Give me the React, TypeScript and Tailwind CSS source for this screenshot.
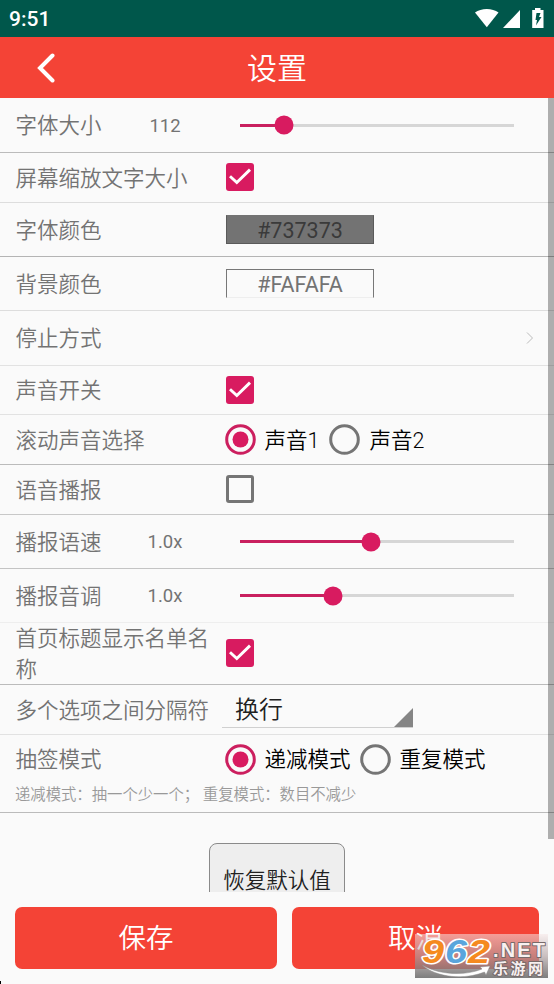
import { ReactNode } from 'react'
import clsx from 'clsx'

// ─────────────────────────────────────────────────────────────
// Controls
// ─────────────────────────────────────────────────────────────

function Checkbox({ checked, className }: { checked?: boolean; className?: string }) {
  if (!checked) {
    return <span className={clsx('size-7 shrink-0 rounded-[3px] border-3 border-[#757575]', className)} />
  }
  return (
    <span className={clsx('size-7 shrink-0 rounded-[3px] bg-[#d81b60]', className)}>
      <svg viewBox="0 0 28 28" className="size-7" fill="none" stroke="#fff" strokeWidth="2.9">
        <path d="M4 13.2 L10.8 19.6 L24 6.6" />
      </svg>
    </span>
  )
}

function Radio({ label, checked }: { label: string; checked?: boolean }) {
  return (
    <label className="flex items-center gap-[9px]">
      <svg viewBox="0 0 31 31" className="size-[31px] shrink-0" fill="none" strokeWidth="3">
        <circle cx="15.5" cy="15.5" r="13.8" stroke={checked ? '#cc1f5f' : '#757575'} />
        {checked && <circle cx="15.5" cy="15.5" r="8" fill="#d81b60" />}
      </svg>
      <span className="pt-[2px] text-[21.5px] leading-7 font-[350] whitespace-nowrap text-black">{label}</span>
    </label>
  )
}

function Slider({ value }: { value: number }) {
  return (
    <div className="relative ml-[14px] h-[3px] w-[274px] bg-[#d6d6d6]">
      <div className="h-full bg-[#c9205f]" style={{ width: value }} />
      <span
        className="absolute top-1/2 size-[19px] -translate-x-1/2 -translate-y-1/2 rounded-full bg-[#d81b60]"
        style={{ left: value }}
      />
    </div>
  )
}

function ColorBox({ value, dark }: { value: string; dark?: boolean }) {
  return (
    <div
      className={clsx(
        'flex h-[29px] w-[148px] items-center justify-center border text-[21.5px]',
        dark
          ? 'border-[#5a5a5a] border-t-[#737373] bg-[#737373] text-[#3a3a3a]'
          : 'border-[#777] border-b-[#eee] text-[#737373]'
      )}
    >
      <span className="pt-[4px]">{value}</span>
    </div>
  )
}

// ─────────────────────────────────────────────────────────────
// Rows
// ─────────────────────────────────────────────────────────────

interface RowProps {
  label: string
  /** Current value shown next to the label */
  value?: string
  className?: string
  children?: ReactNode
}

function Row({ label, value, className, children }: RowProps) {
  return (
    <div className={clsx('flex items-center border-b pl-[15.5px]', className)}>
      <div className="flex w-[210.5px] shrink-0 items-center pt-px">
        <span
          className={clsx('text-[21.5px] leading-[31px] font-[350]', value ? 'w-[116.5px]' : 'w-[196px]')}
        >
          {label}
        </span>
        {value && <span className="w-[66px] pt-[2px] text-center text-[18.5px]">{value}</span>}
      </div>
      {children}
    </div>
  )
}

function StatusBar() {
  return (
    <div className="flex h-[37px] items-center justify-between bg-[#00574b] pr-[9px] pl-[9px] text-white">
      <span className="pt-[2px] text-[21px] font-medium">9:51</span>
      <svg width="70" height="37" viewBox="0 0 70 37" fill="#fff">
        <path d="M0 12.5 C6 7.7 17.5 7.7 23.5 12.5 L11.8 27.3 Z" />
        <path d="M28 28 L45 10 V28 Z" />
        <path d="M57.2 10 H60 V8 H65.5 V10 H68.5 V28 H57.2 Z" />
        <path d="M61.5 13 L65.5 13 L64 17 H66.5 L61 25.5 L62 20 H60.5 Z" fill="#00574b" />
      </svg>
    </div>
  )
}

function Watermark() {
  return (
    <div className="absolute right-[6px] bottom-[6px] h-11 w-[133px] bg-linear-to-b from-[#f6e6e6]/55 via-[#b0a0a0]/65 to-[#707070]/90">
      <svg
        viewBox="0 0 133 44"
        className="h-11 w-[133px] overflow-visible"
        fontFamily="'Liberation Sans', 'Noto Sans CJK SC', sans-serif"
      >
        <g fontSize="34" fontWeight="700" fontStyle="italic" strokeLinejoin="round" paintOrder="stroke">
          <g stroke="#fff" strokeWidth="3">
            <text x="7" y="29" textLength="22" lengthAdjust="spacingAndGlyphs" fill="#f58a1f">9</text>
            <text x="30" y="29" textLength="22" lengthAdjust="spacingAndGlyphs" fill="#5aa5dc">6</text>
            <text x="53" y="29" textLength="22" lengthAdjust="spacingAndGlyphs" fill="#f58a1f">2</text>
          </g>
        </g>
        <path
          d="M7 31 C24 41 50 42 67 35 L65 33 L75 32 L71 41 L69.5 38 C50 46 22 44 7 31 Z"
          fill="#fff"
          stroke="#888"
          strokeWidth="0.5"
        />
        <g fontWeight="700" fill="#f8f0f0" stroke="#776a6a" strokeWidth="2" strokeLinejoin="round" paintOrder="stroke">
          <text x="78" y="22.5" fontSize="20" textLength="52" lengthAdjust="spacing">.NET</text>
          <text x="78" y="39.5" fontSize="15" textLength="50">乐游网</text>
        </g>
      </svg>
    </div>
  )
}

export default function App() {
  return (
    <main className="relative flex h-[984px] w-[554px] flex-col overflow-hidden bg-[#fafafa] font-[Roboto,'Noto_Sans_CJK_SC',sans-serif] text-[#737373]">
      <StatusBar />
      <header className="grid h-[61px] grid-cols-[1fr_auto_1fr] items-center bg-[#f44336] text-white">
        <svg
          width="20"
          height="32"
          viewBox="0 0 20 32"
          className="mb-[2px] ml-9"
          fill="none"
          stroke="#fff"
          strokeWidth="4"
          strokeLinecap="round"
        >
          <path d="M16.5 4.5 L4 17 L16.5 29.5" />
        </svg>
        <h1 className="pt-[2px] text-[30px] font-[350]">设置</h1>
      </header>

      {/* Scrollable settings list, cut off above the footer */}
      <div className="relative h-[794px] overflow-hidden">
        <Row label="字体大小" value="112" className="h-[55px] border-[#bbb]">
          <Slider value={44} />
        </Row>
        <Row label="屏幕缩放文字大小" className="h-[50px] border-[#ddd]">
          <Checkbox checked className="mb-px" />
        </Row>
        <Row label="字体颜色" className="h-[54px] border-[#b4b4b4]">
          <ColorBox value="#737373" dark />
        </Row>
        <Row label="背景颜色" className="h-[54px] border-[#ddd]">
          <ColorBox value="#FAFAFA" />
        </Row>
        <Row label="停止方式" className="h-[55px] border-[#e2e2e2]">
          <svg width="8" height="12" viewBox="0 0 8 12" className="mr-5 ml-auto" fill="none" stroke="#bbb">
            <path d="M1 .5 L6.5 6 L1 11.5" />
          </svg>
        </Row>
        <Row label="声音开关" className="h-[49px] border-[#e2e2e2]">
          <Checkbox checked />
        </Row>
        <Row label="滚动声音选择" className="h-[50px] border-[#bbb]">
          <div className="-ml-[1.5px] flex gap-[10px]">
            <Radio label="声音1" checked />
            <Radio label="声音2" />
          </div>
        </Row>
        <Row label="语音播报" className="h-[50px] border-[#c8c8c8]">
          <Checkbox className="mb-px" />
        </Row>
        <Row label="播报语速" value="1.0x" className="h-[54px] border-[#c4c4c4]">
          <Slider value={131} />
        </Row>
        <Row label="播报音调" value="1.0x" className="h-[54px] border-[#eee]">
          <Slider value={93} />
        </Row>
        <Row label="首页标题显示名单名称" className="h-[62px] border-[#bbb]">
          <Checkbox checked className="mb-px" />
        </Row>
        <Row label="多个选项之间分隔符" className="h-[50px] border-[#e2e2e2]">
          <div className="mb-1.5 -ml-1 flex h-9 w-[191px] items-end justify-between self-end border-b border-[#d0d0d0] pl-[13px]">
            <span className="text-2xl leading-[34px] font-[350] text-[#212121]">换行</span>
            <svg width="19" height="19" viewBox="0 0 19 19" fill="#858585">
              <path d="M19 0 V19 H0 Z" />
            </svg>
          </div>
        </Row>
        <div className="h-[78px] border-b border-[#bbb]">
          <Row label="抽签模式" className="h-[49px] border-transparent">
            <div className="-ml-[1.5px] flex gap-[9px]">
              <Radio label="递减模式" checked />
              <Radio label="重复模式" />
            </div>
          </Row>
          <p className="pl-[15px] text-[15.35px] leading-[23px] font-[350] whitespace-nowrap text-[#999]">
            递减模式：抽一个少一个； 重复模式：数目不减少
          </p>
        </div>
        <button className="mx-auto mt-[30px] block h-[77px] w-[136px] rounded-lg border border-[#8a8a8a] bg-[#eee] text-[21.5px] font-[350] text-[#212121]">
          恢复默认值
        </button>
        <span className="absolute top-0 right-0 h-[741px] w-1.5 bg-black/30" />
      </div>

      {/* Footer actions */}
      <footer className="flex gap-[15px] px-[15px] pt-[15px] text-[27.5px] text-white">
        <button className="h-[62px] w-[262px] rounded-[7px] bg-[#f44336] pt-[2px] font-[350]">保存</button>
        <button className="h-[62px] flex-1 rounded-[7px] bg-[#f44336] pt-[2px] font-[350]">取消</button>
      </footer>
      <Watermark />
      {/* Dark speck in the screen corner */}
      <span className="absolute bottom-0 left-0 h-[3px] w-px bg-black" />
    </main>
  )
}
